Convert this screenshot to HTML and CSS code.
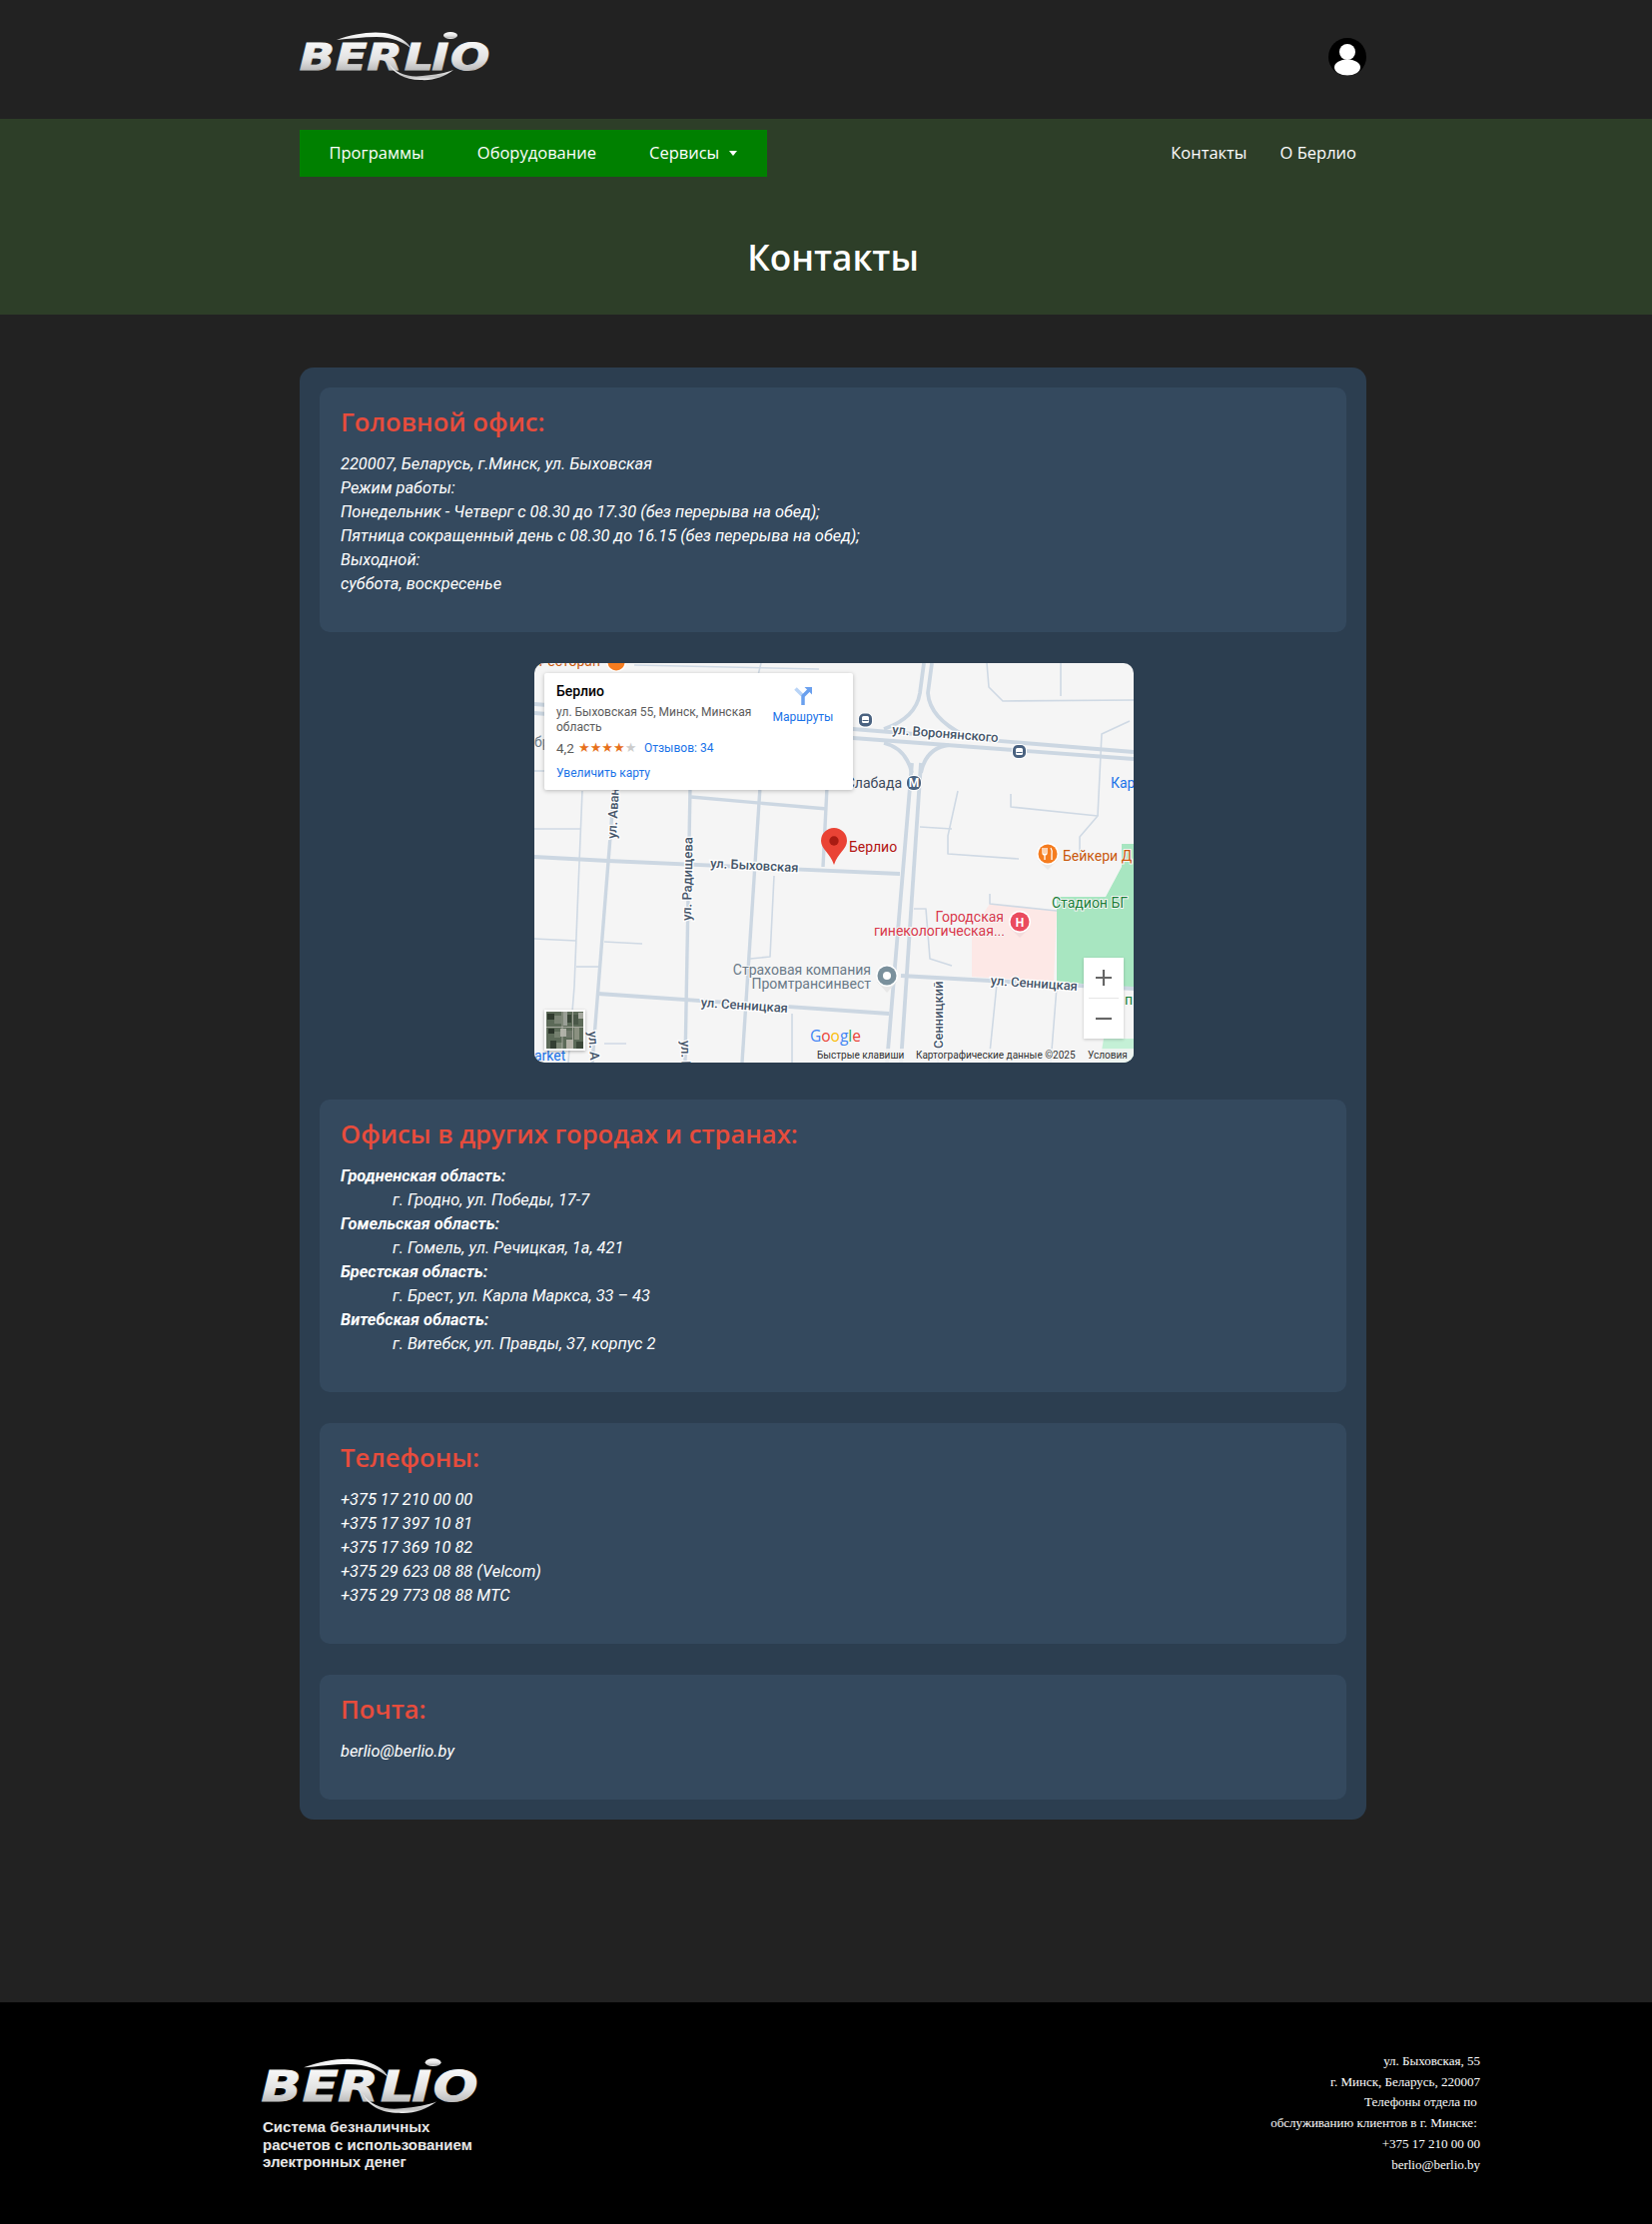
FILE: index.html
```html
<!DOCTYPE html>
<html lang="ru">
<head>
<meta charset="utf-8">
<title>Контакты — Берлио</title>
<link rel="stylesheet" href="styles.css">
</head>
<body>
<header class="top">
  <div class="wrap top-row">
    <svg class="logo" viewBox="0 0 189 48" width="189" height="48" role="img" aria-label="Berlio">
      <defs>
        <linearGradient id="chrome" x1="0" y1="0" x2="0" y2="1">
          <stop offset="0" stop-color="#ffffff"/>
          <stop offset="0.55" stop-color="#e2e2e2"/>
          <stop offset="0.8" stop-color="#bdbdbd"/>
          <stop offset="1" stop-color="#f2f2f2"/>
        </linearGradient>
      </defs>
      <g fill="url(#chrome)">
        <g transform="scale(1.25 1)" stroke="url(#chrome)" stroke-width="0.9">
          <text class="logo-type" x="-1 28 53 83 105 120" y="38">BERLIO</text>
        </g>
        <path d="M36 8 C55 1 78 -2 92 3 C101 6 108 11 110 16 C102 10 92 5 76 5 C62 5 48 7 36 8Z"/>
        <path d="M88 31 C94 41 108 46 122 44 C134 43 146 41 153 38 C144 45 132 49 120 48 C104 48 92 41 88 31Z"/>
        <ellipse cx="150" cy="3.5" rx="7" ry="3.4"/>
      </g>
    </svg>
    <svg class="avatar" viewBox="0 0 38 38" width="38" height="38" role="img" aria-label="Профиль">
      <circle cx="19" cy="19" r="19" fill="#000"/>
      <circle cx="19" cy="14" r="8" fill="#fff"/>
      <ellipse cx="19" cy="29.500" rx="13" ry="8" fill="#fff"/>
    </svg>
  </div>
</header>

<section class="hero">
  <nav class="wrap menu">
    <ul class="menu-main">
      <li class="menu-item">Программы</li>
      <li class="menu-item">Оборудование</li>
      <li class="menu-item">Сервисы<span class="caret"></span></li>
    </ul>
    <ul class="menu-side">
      <li class="menu-item">Контакты</li>
      <li class="menu-item">О Берлио</li>
    </ul>
  </nav>
  <h1 class="page-title">Контакты</h1>
</section>

<main class="wrap content">
  <div class="sheet">
    <section class="panel">
      <h2 class="panel-title">Головной офис:</h2>
      <p class="panel-text">220007, Беларусь, г.Минск, ул. Быховская<br>Режим работы:<br>Понедельник - Четверг с 08.30 до 17.30 (без перерыва на обед);<br>Пятница сокращенный день с 08.30 до 16.15 (без перерыва на обед);<br>Выходной:<br>суббота, воскресенье</p>
    </section>

    <div class="map">
      <svg class="map-art" viewBox="0 0 600 400" width="600" height="400">
        <rect width="600" height="400" fill="#f5f5f5"/>
        <path class="pink" d="M456 241 L523 248 L520 319 L438 314 L438 268 Z"/>
        <path class="green" d="M523 234 L572 234 L588 204 L588 181 L600 181 L600 325 L523 319 Z"/>
        <path class="green-light" d="M570 376 L600 376 L600 400 L566 400 Z"/>
        <g class="road-s">
          <path d="M453 0 L455 24 L469 38 L600 37"/>
          <path d="M527 0 L527 33"/>
          <path d="M564 153 L568 71 L596 58"/>
          <path d="M477 131 L477 144 L564 153 L546 174 L546 194"/>
          <path d="M386 164 L418 166"/>
          <path d="M424 128 L414 173 L414 191 L485 196"/>
          <path d="M0 166 L46 166"/>
          <path d="M48 128 L44 224 L40 324 L34 400"/>
          <path d="M0 276 L42 278"/>
          <path d="M70 279 L108 281"/>
          <path d="M42 304 L65 304"/>
          <path d="M0 108 L17 108"/>
          <path d="M240 213 L236 294 L216 296"/>
          <path d="M380 246 L392 246 L396 296 L418 303"/>
          <path d="M456 231 L456 241 L523 248"/>
          <path d="M463 321 L455 400"/>
          <path d="M523 324 L517 400"/>
          <path d="M408 318 L404 400"/>
          <path d="M258 351 L258 400"/>
          <path d="M70 381 L92 381"/>
          <path d="M227 0 L224 12"/>
          <path d="M100 2 L285 6"/>
        </g>
        <g class="road-m">
          <path d="M156 124 L151 400"/>
          <path d="M226 124 L208 400"/>
          <path d="M293 124 L289 204"/>
          <path d="M157 134 L293 146"/>
          <path d="M80 124 L58 400"/>
        </g>
        <g class="road-l">
          <path d="M0 41 L319 66 L600 89"/>
          <path d="M0 50 L319 75 L600 96"/>
          <path d="M390 0 L386 30 Q382 55 350 66"/>
          <path d="M398 0 L394 30 Q396 55 430 72"/>
          <path d="M350 80 Q372 85 378 110"/>
          <path d="M415 82 Q392 85 387 110"/>
          <path d="M378 100 L353 400"/>
          <path d="M387 100 L367 400"/>
          <path d="M0 194 L74 198 L366 211"/>
          <path d="M64 331 L355 351"/>
          <path d="M367 313 L600 326"/>
        </g>

        <text class="lbl-road" text-anchor="middle" transform="translate(411 75) rotate(4.5)">ул. Воронянского</text>
        <text class="lbl-road" text-anchor="middle" transform="translate(220 207) rotate(3)">ул. Быховская</text>
        <text class="lbl-road" transform="translate(82 176) rotate(-87)">ул. Авангардная</text>
        <text class="lbl-road" transform="translate(157 258) rotate(-89)">ул. Радищева</text>
        <text class="lbl-road" text-anchor="middle" transform="translate(210 347) rotate(4)">ул. Сенницкая</text>
        <text class="lbl-road" text-anchor="middle" transform="translate(500 325) rotate(4)">ул. Сенницкая</text>
        <text class="lbl-road" transform="translate(409 386) rotate(-90)">Сенницкий</text>
        <text class="lbl-road" transform="translate(54 369) rotate(86)">ул. А</text>
        <text class="lbl-road" transform="translate(147 378) rotate(89)">ул. Р</text>

        <text class="lbl-place lbl-dark" x="368" y="125" text-anchor="end">Слабада</text>
        <text class="lbl-place lbl-blue" x="577" y="125">Кар</text>
        <text class="lbl-place lbl-blue" x="0" y="398">arket</text>
        <text class="lbl-place lbl-gray" x="0" y="84">бр</text>
        <text class="lbl-place lbl-orange" x="66" y="3" text-anchor="end">Кафе Ресторан</text>
        <text class="lbl-place lbl-orange" x="529" y="198">Бейкери Д</text>
        <text class="lbl-place lbl-green" x="518" y="245">Стадион БГ</text>
        <text class="lbl-place lbl-green" x="591" y="342">п</text>
        <text class="lbl-place lbl-red" x="470" y="259" text-anchor="end">Городская</text>
        <text class="lbl-place lbl-red" x="471" y="273" text-anchor="end">гинекологическая...</text>
        <text class="lbl-place lbl-gray" x="337" y="312" text-anchor="end">Страховая компания</text>
        <text class="lbl-place lbl-gray" x="337" y="326" text-anchor="end">Промтрансинвест</text>
        <text class="lbl-pin" x="315" y="189">Берлио</text>

        <g class="poi">
          <circle cx="82" cy="-1" r="10" fill="#fff"/><circle cx="82" cy="-1" r="8.5" fill="#f57c1f"/>
          <rect x="324" y="49.500" width="15" height="15" rx="6" fill="#fff"/><rect x="325" y="50.500" width="13" height="13" rx="5" fill="#4a6280"/>
          <rect x="328" y="53" width="7" height="7" rx="1.500" fill="#fff"/><rect x="328.500" y="57" width="6" height="1" fill="#4a6280"/>
          <rect x="478" y="81" width="15" height="15" rx="6" fill="#fff"/><rect x="479" y="82" width="13" height="13" rx="5" fill="#4a6280"/>
          <rect x="482" y="85" width="7" height="7" rx="1.500" fill="#fff"/><rect x="482.500" y="89" width="6" height="1" fill="#4a6280"/>
          <rect x="372" y="112" width="16" height="16" rx="7" fill="#fff"/><rect x="373" y="113" width="14" height="14" rx="6" fill="#4a6280"/>
          <text class="lbl-metro" x="380" y="124" text-anchor="middle">М</text>

          <path d="M504 197 L514 207 L524 197 Z" fill="#e9e9e9"/><circle cx="514" cy="191" r="11" fill="#fff"/><circle cx="514" cy="191" r="9.500" fill="#f57c1f"/>
          <path d="M509 185 L509 190 Q509 192 511 192 L511 197 M511 185 L511 192 M513 185 L513 190 Q513 192 511 192 M517 185 Q519 188 518 192 L518 197" fill="none" stroke="#fff" stroke-width="1.300"/>

          <path d="M476 265 L486 275 L496 265 Z" fill="#f3dcdc"/><circle cx="486" cy="259" r="11" fill="#fff"/><circle cx="486" cy="259" r="9.500" fill="#ea4b5e"/>
          <text class="lbl-metro" x="486" y="264" text-anchor="middle">H</text>

          <path d="M343 319 L353 330 L363 319 Z" fill="#e7e7e7"/><circle cx="353" cy="313" r="11" fill="#fff"/><circle cx="353" cy="313" r="9.500" fill="#7a909c"/><circle cx="353" cy="313" r="4" fill="#fff"/>
        </g>

        <path d="M300 202 C296 190 287 186 287 178 A13 13 0 0 1 313 178 C313 186 304 190 300 202Z" fill="#ea4335"/>
        <circle cx="300" cy="178" r="4.700" fill="#a91b12"/>

        <rect x="283" y="386" width="317" height="14" fill="#f5f5f5" opacity="0.85"/>
        <text class="lbl-google" x="276" y="379"><tspan fill="#4285f4">G</tspan><tspan fill="#ea4335">o</tspan><tspan fill="#fbbc05">o</tspan><tspan fill="#4285f4">g</tspan><tspan fill="#34a853">l</tspan><tspan fill="#ea4335">e</tspan></text>
        <text class="lbl-attr" x="283" y="396">Быстрые клавиши</text>
        <text class="lbl-attr" x="382" y="396">Картографические данные ©2025</text>
        <text class="lbl-attr" x="554" y="396">Условия</text>
      </svg>

      <div class="map-card">
        <div class="map-card-main">
          <div class="map-name">Берлио</div>
          <div class="map-addr">ул. Быховская 55, Минск, Минская область</div>
          <div class="map-rate"><span class="map-score">4,2</span><span class="stars">★★★★<span class="star-off">★</span></span><span class="map-link map-reviews">Отзывов: 34</span></div>
          <div class="map-link map-more">Увеличить карту</div>
        </div>
        <div class="map-route">
          <svg class="route-icon" viewBox="0 0 18 18" width="18" height="18">
            <path d="M1.500 1.500 L8 8" fill="none" stroke="#b9d4f7" stroke-width="3.500"/>
            <path d="M9 18 L9 9 L15 3" fill="none" stroke="#6aa0ee" stroke-width="3.500"/>
            <path d="M10.500 0 L18 0 L18 7.500 Z" fill="#6aa0ee"/>
          </svg>
          <span class="map-link">Маршруты</span>
        </div>
      </div>

      <div class="map-zoom">
        <svg viewBox="0 0 40 81" width="40" height="81">
          <rect width="40" height="81" fill="#fff"/>
          <path d="M12 20 H28 M20 12 V28" stroke="#666" stroke-width="2.200" fill="none"/>
          <path d="M5 40.500 H35" stroke="#e6e6e6" stroke-width="1"/>
          <path d="M12 61 H28" stroke="#666" stroke-width="2.200" fill="none"/>
        </svg>
      </div>

      <div class="map-sat">
        <svg viewBox="0 0 37 37" width="37" height="37">
          <rect width="37" height="37" fill="#5c6a58"/>
          <rect x="1" y="2" width="7" height="6" fill="#2f3a2e"/>
          <rect x="8" y="4" width="7" height="8" fill="#7b8475"/>
          <rect x="17" y="0" width="4" height="14" fill="#9a9f96"/>
          <rect x="21" y="3" width="4" height="8" fill="#3a4638"/>
          <rect x="27" y="3" width="5" height="10" fill="#4a5748"/>
          <rect x="32" y="1" width="5" height="6" fill="#a5a89e"/>
          <rect x="2" y="17" width="6" height="5" fill="#2b352a"/>
          <rect x="8" y="20" width="6" height="6" fill="#75806f"/>
          <rect x="14" y="17" width="6" height="8" fill="#aeb0a6"/>
          <rect x="20" y="19" width="6" height="7" fill="#6d7668"/>
          <rect x="28" y="16" width="5" height="12" fill="#8a9080"/>
          <rect x="4" y="29" width="6" height="8" fill="#343f33"/>
          <rect x="10" y="31" width="6" height="6" fill="#7d8776"/>
          <rect x="20" y="28" width="7" height="9" fill="#b3b1a6"/>
          <rect x="30" y="30" width="7" height="7" fill="#3c4839"/>
          <path d="M0 15.500 H37 M16 0 V37 M26.500 0 V37" stroke="#b8b8ae" stroke-width="0.800"/>
        </svg>
      </div>
    </div>

    <section class="panel">
      <h2 class="panel-title">Офисы в других городах и странах:</h2>
      <div class="panel-text">
        <div class="region">Гродненская область:</div>
        <div class="city">г. Гродно, ул. Победы, 17-7</div>
        <div class="region">Гомельская область:</div>
        <div class="city">г. Гомель, ул. Речицкая, 1а, 421</div>
        <div class="region">Брестская область:</div>
        <div class="city">г. Брест, ул. Карла Маркса, 33 – 43</div>
        <div class="region">Витебская область:</div>
        <div class="city">г. Витебск, ул. Правды, 37, корпус 2</div>
      </div>
    </section>

    <section class="panel">
      <h2 class="panel-title">Телефоны:</h2>
      <p class="panel-text">+375 17 210 00 00<br>+375 17 397 10 81<br>+375 17 369 10 82<br>+375 29 623 08 88 (Velcom)<br>+375 29 773 08 88 МТС</p>
    </section>

    <section class="panel">
      <h2 class="panel-title">Почта:</h2>
      <p class="panel-text">berlio@berlio.by</p>
    </section>
  </div>
</main>

<footer class="foot">
  <div class="foot-brand">
    <svg class="foot-logo" viewBox="0 0 189 48" width="215" height="57" role="img" aria-label="Berlio">
      <g fill="url(#chrome)">
        <g transform="scale(1.25 1)" stroke="url(#chrome)" stroke-width="0.9">
          <text class="logo-type" x="-1 28 53 83 105 120" y="38">BERLIO</text>
        </g>
        <path d="M36 8 C55 1 78 -2 92 3 C101 6 108 11 110 16 C102 10 92 5 76 5 C62 5 48 7 36 8Z"/>
        <path d="M88 31 C94 41 108 46 122 44 C134 43 146 41 153 38 C144 45 132 49 120 48 C104 48 92 41 88 31Z"/>
        <ellipse cx="150" cy="3.5" rx="7" ry="3.4"/>
      </g>
    </svg>
    <div class="foot-tag">Система безналичных<br>расчетов с использованием<br>электронных денег</div>
  </div>
  <address class="foot-info">ул. Быховская, 55<br>г. Минск, Беларусь, 220007<br>Телефоны отдела по&nbsp;<br>обслуживанию клиентов в г. Минске:&nbsp;<br>+375 17 210 00 00<br>berlio@berlio.by</address>
</footer>
</body>
</html>
```

FILE: styles.css
```css
* { box-sizing: border-box; }
html, body { margin: 0; padding: 0; }
body { background: #222; color: #fff; font-family: Roboto, sans-serif; }
.wrap { width: 1068px; margin-left: 300px; }

.top { height: 119px; }
.top-row { display: flex; justify-content: space-between; align-items: flex-start; padding-top: 32px; height: 119px; padding-left: 1px; }
.logo { display: block; overflow: visible; }
.logo-type { font-family: "DejaVu Sans", sans-serif; font-weight: 700; font-style: italic; font-size: 37px; }
.avatar { display: block; margin-top: 6px; }

.hero { background: #2d3e28; height: 196px; padding-top: 11px; }
.menu { display: flex; justify-content: space-between; align-items: center; font-family: "Open Sans", sans-serif; font-size: 16.500px; font-weight: 500; }
.menu ul { list-style: none; margin: 0; padding: 0 0 2px; display: flex; align-items: center; height: 47px; }
.menu-item { white-space: nowrap; }
.menu-main { background: #008000; padding: 0 3px 2px !important; width: 468px; }
.menu-main .menu-item { padding: 0 26.500px; }
.menu-side { gap: 33px; padding-right: 10px !important; }
.caret { display: inline-block; margin-left: 10px; vertical-align: 3px; border-top: 5px solid #fff; border-left: 4.800px solid transparent; border-right: 4.800px solid transparent; }
.page-title { margin: 0; padding: 56px 0 0 14px; text-align: center; font-family: "Open Sans", sans-serif; font-size: 35.200px; font-weight: 600; line-height: 48px; color: #fff; }

.content { padding-top: 53px; padding-bottom: 183px; }
.sheet { background: #2c3e50; border-radius: 14px; padding: 20px; display: flex; flex-direction: column; gap: 31px; }
.panel { background: #34495e; border-radius: 10px; padding: 20px 21px 36px; }
.panel-title { margin: 0 0 16px; font-family: "Open Sans", sans-serif; font-size: 25.600px; font-weight: 600; line-height: 29px; color: #e74c3c; }
.panel-text { margin: 0; font-size: 16.400px; line-height: 24px; font-style: italic; color: #fff; }
.region { font-weight: 700; }
.city { padding-left: 52px; }

.map { position: relative; width: 600px; height: 400px; margin: 0 auto 6px; border-radius: 10px; overflow: hidden; left: 1px; }
.map-art { display: block; }
.pink { fill: #fde8e6; }
.green { fill: #a8e6c1; }
.green-light { fill: #c4f0d6; }
.road-s path, .road-m path, .road-l path { fill: none; stroke-linejoin: round; }
.road-s path { stroke: #cfd9e4; stroke-width: 1.600; }
.road-m path { stroke: #ccd7e2; stroke-width: 3.400; }
.road-l path { stroke: #ccd7e2; stroke-width: 3.800; }
.map-art text { font-family: Roboto, sans-serif; }
.lbl-road { font-size: 13px; font-weight: 500; fill: #46566a; stroke: #fff; stroke-width: 2.500px; paint-order: stroke; }
.lbl-place { font-size: 14px; stroke: #f5f5f5; stroke-width: 2px; paint-order: stroke; }
.lbl-dark { fill: #3c4a5c; }
.lbl-blue { fill: #1a73e8; }
.lbl-gray { fill: #6a7a88; }
.lbl-orange { fill: #c9590e; }
.lbl-green { fill: #188038; }
.lbl-red { fill: #d9394c; }
.lbl-pin { font-size: 14px; fill: #b31412; stroke: #f5f5f5; stroke-width: 2px; paint-order: stroke; }
.lbl-metro { font-size: 12px; font-weight: 700; fill: #fff; }
.lbl-google { font-family: "Open Sans", sans-serif !important; font-size: 15.500px; font-weight: 500; }
.lbl-attr { font-size: 10px; fill: #333; }

.map-card { position: absolute; left: 10px; top: 10px; width: 309px; height: 117px; background: #fff; border-radius: 2px; box-shadow: 0 1px 4px rgba(0,0,0,.25); display: flex; color: #5b5b5b; font-size: 12px; font-style: normal; }
.map-card-main { width: 219px; padding: 9px 0 0 12px; flex: none; }
.map-name { font-size: 14px; font-weight: 500; color: #000; line-height: 18px; }
.map-addr { margin-top: 5px; line-height: 15px; }
.map-rate { display: flex; align-items: center; margin-top: 5px; line-height: 16px; }
.map-score { font-size: 13.500px; width: 22px; }
.stars { font-family: "DejaVu Sans", sans-serif; font-size: 13px; color: #e7711b; width: 66px; }
.star-off { color: #ccc; }
.map-link { color: #1a73e8; }
.map-more { margin-top: 10px; line-height: 15px; }
.map-route { flex: 1; display: flex; flex-direction: column; align-items: center; padding-top: 14px; padding-right: 10px; gap: 5px; line-height: 14px; white-space: nowrap; }
.route-icon { display: block; }

.map-zoom { position: absolute; left: 550px; top: 295px; box-shadow: 0 1px 3px rgba(0,0,0,.2); }
.map-zoom svg { display: block; }
.map-sat { position: absolute; left: 10px; top: 347px; padding: 2px; background: #fff; box-shadow: 0 1px 3px rgba(0,0,0,.3); }
.map-sat svg { display: block; }

.foot { background: #000; height: 222px; display: flex; justify-content: space-between; padding: 55px 172px 0 263px; }
.foot-logo { display: block; overflow: visible; }
.foot-tag { margin-top: 4px; font-family: "Liberation Sans", sans-serif; font-weight: 700; font-size: 15px; line-height: 17.500px; color: #e8e8e8; }
.foot-info { margin-top: -6px; font-family: "Liberation Serif", serif; font-style: normal; font-size: 13px; line-height: 20.700px; text-align: right; color: #fff; }
```
